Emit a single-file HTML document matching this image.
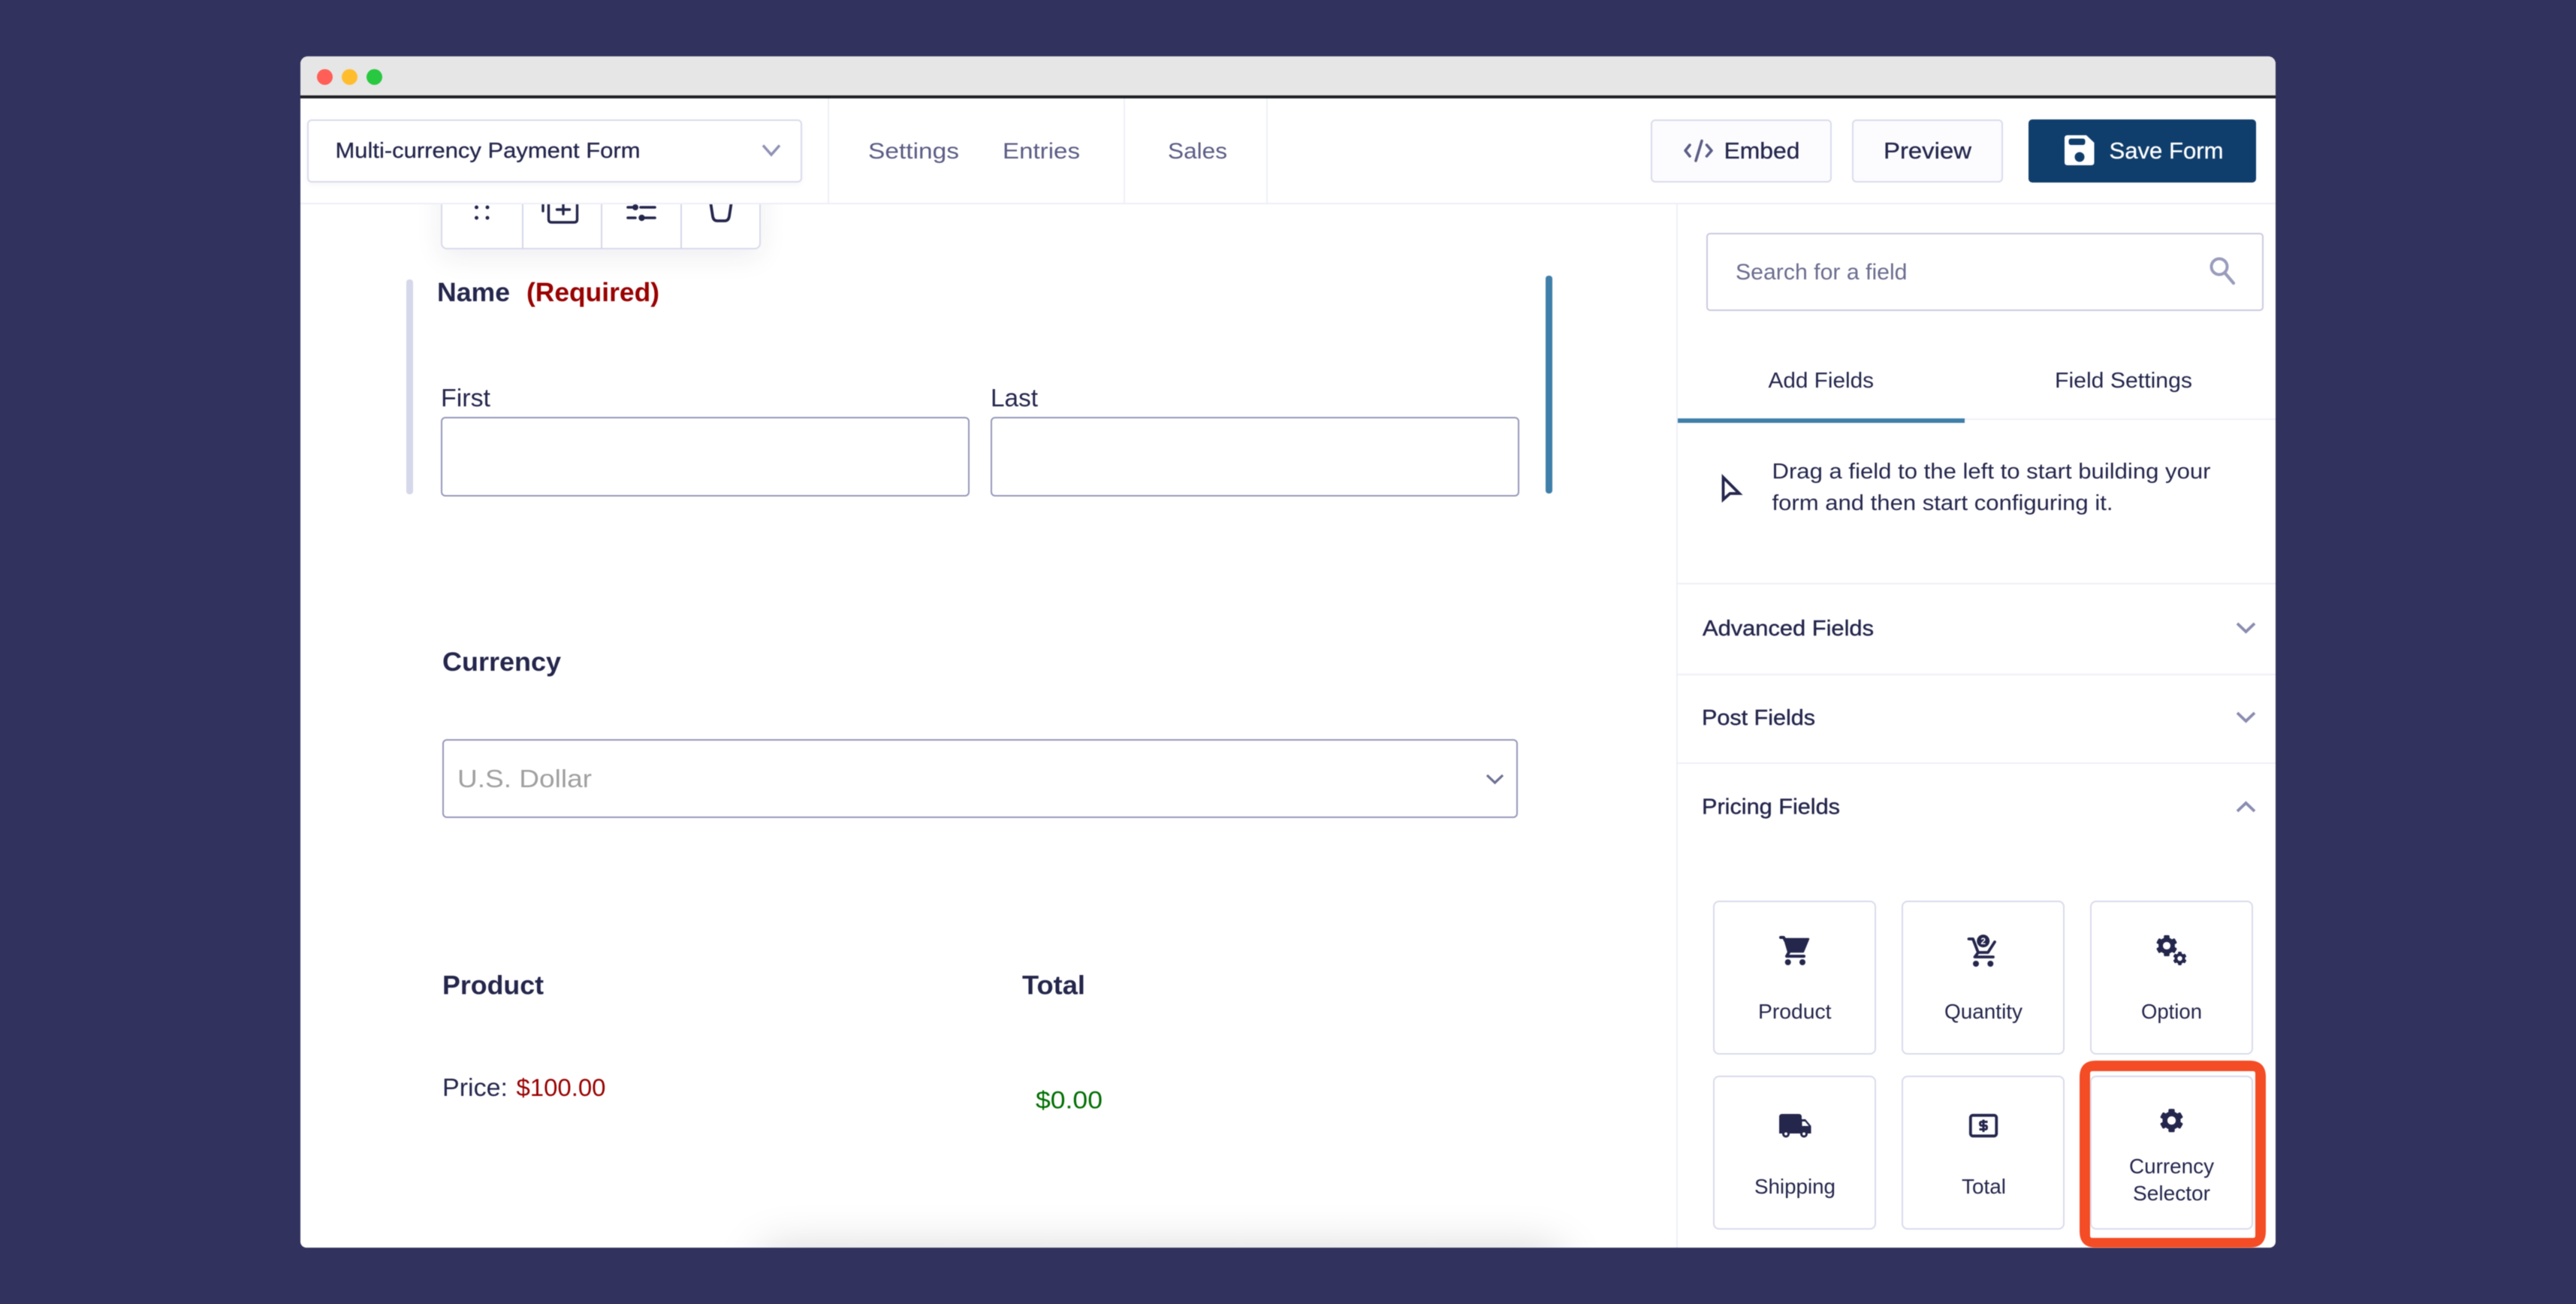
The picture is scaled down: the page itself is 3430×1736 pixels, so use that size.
<!DOCTYPE html>
<html lang="en">
<head>
<meta charset="utf-8">
<title>Multi-currency Payment Form</title>
<style>
html,body{margin:0;padding:0;width:3430px;height:1736px;overflow:hidden;background:#31335e}
.b{position:absolute;box-sizing:border-box}
#win{position:absolute;left:400px;top:75px;width:2630px;height:1586px;background:#fff;border-radius:10px 10px 8px 8px;overflow:hidden;filter:blur(.5px)}
.w{position:absolute;box-sizing:border-box}
.card{position:absolute;box-sizing:border-box;background:#fff;border:2.5px solid #d9dbec;border-radius:8px;width:217px;height:205px}
.hl{position:absolute;background:#eeeef8;height:2px}
.vl{position:absolute;background:#eeeef8;width:2px}
svg{position:absolute;left:0;top:0;filter:blur(.5px)}
text{font-family:"Liberation Sans",sans-serif;fill:#24264c}
.m{stroke:#24264c;stroke-width:.5px}
.g{fill:#5b5d85}
</style>
</head>
<body>
<div id="win">
  <!-- page shadow at the bottom of the canvas -->
  <div class="w" style="left:612px;top:1587px;width:1068px;height:60px;border-radius:20px;box-shadow:0 0 60px rgba(0,0,0,.17)"></div>

  <!-- field toolbar -->
  <div class="w" style="left:187px;top:150px;width:426px;height:107px;background:#fff;border:2.5px solid #d9dbec;border-radius:8px;box-shadow:0 10px 36px rgba(36,38,76,.08)"></div>
  <div class="w" style="left:295px;top:190px;width:2px;height:66px;background:#d5d7ea"></div>
  <div class="w" style="left:400px;top:190px;width:2px;height:66px;background:#d5d7ea"></div>
  <div class="w" style="left:506px;top:190px;width:2px;height:66px;background:#d5d7ea"></div>

  <!-- title bar -->
  <div class="w" style="left:0;top:0;width:2630px;height:52px;background:#e6e6e6"></div>
  <div class="w" style="left:0;top:52px;width:2630px;height:4px;background:#1d2125"></div>
  <div class="w" style="left:22px;top:17px;width:21px;height:21px;border-radius:50%;background:#ff5f57"></div>
  <div class="w" style="left:55px;top:17px;width:21px;height:21px;border-radius:50%;background:#ffbd2e"></div>
  <div class="w" style="left:88px;top:17px;width:21px;height:21px;border-radius:50%;background:#28c840"></div>

  <!-- header -->
  <div class="w" style="left:0;top:56px;width:2630px;height:139px;background:#fff"></div>
  <div class="hl" style="left:0;top:195px;width:2630px"></div>
  <div class="vl" style="left:702px;top:56px;height:139px"></div>
  <div class="vl" style="left:1096px;top:56px;height:139px"></div>
  <div class="vl" style="left:1286px;top:56px;height:139px"></div>
  <div class="w" style="left:9px;top:84px;width:659px;height:84px;background:#fff;border:2.5px solid #d9dbec;border-radius:6px;box-shadow:0 3px 8px rgba(36,38,76,.04)"></div>
  <div class="w" style="left:1798px;top:84px;width:241px;height:84px;background:#fcfcff;border:2.5px solid #d9dbec;border-radius:6px"></div>
  <div class="w" style="left:2066px;top:84px;width:201px;height:84px;background:#fcfcff;border:2.5px solid #d9dbec;border-radius:6px"></div>
  <div class="w" style="left:2301px;top:84px;width:303px;height:84px;background:#103e6c;border-radius:5px"></div>

  <!-- sidebar -->
  <div class="vl" style="left:1832px;top:197px;height:1389px"></div>
  <div class="w" style="left:1872px;top:235px;width:742px;height:104px;background:#fff;border:2.5px solid #c8cae0;border-radius:5px"></div>
  <div class="hl" style="left:2216px;top:482px;width:414px"></div>
  <div class="w" style="left:1834px;top:482px;width:382px;height:6px;background:#3f7fa9"></div>
  <div class="hl" style="left:1834px;top:701px;width:796px"></div>
  <div class="hl" style="left:1834px;top:822px;width:796px"></div>
  <div class="hl" style="left:1834px;top:940px;width:796px"></div>

  <div class="card" style="left:1881px;top:1124px"></div>
  <div class="card" style="left:2132px;top:1124px"></div>
  <div class="card" style="left:2383px;top:1124px"></div>
  <div class="card" style="left:1881px;top:1357px"></div>
  <div class="card" style="left:2132px;top:1357px"></div>
  <div class="card" style="left:2383px;top:1357px"></div>

  <!-- name field -->
  <div class="w" style="left:141px;top:297px;width:9px;height:286px;background:#d5d7ea;border-radius:4px"></div>
  <div class="w" style="left:1658px;top:292px;width:9px;height:290px;background:#3f7fa9;border-radius:4px"></div>
  <div class="w" style="left:187px;top:480px;width:704px;height:106px;border:2.5px solid #9597ba;border-radius:6px;background:#fff"></div>
  <div class="w" style="left:919px;top:480px;width:704px;height:106px;border:2.5px solid #9597ba;border-radius:6px;background:#fff"></div>
  <div class="w" style="left:189px;top:909px;width:1432px;height:105px;border:2.5px solid #9597ba;border-radius:6px;background:#fff"></div>
</div>

<svg width="3430" height="1736" viewBox="0 0 3430 1736" xmlns="http://www.w3.org/2000/svg">
  <defs>
    <clipPath id="tb"><rect x="588" y="272" width="425" height="60"/></clipPath>
    <g id="gear">
      <circle r=".78" fill="#24264c"/>
      <rect x="-.27" y="-1" width=".54" height="2" rx=".12" fill="#24264c"/>
      <rect x="-.27" y="-1" width=".54" height="2" rx=".12" fill="#24264c" transform="rotate(60)"/>
      <rect x="-.27" y="-1" width=".54" height="2" rx=".12" fill="#24264c" transform="rotate(120)"/>
      <circle r=".36" fill="#fff"/>
    </g>
  </defs>

  <!-- toolbar icons -->
  <g clip-path="url(#tb)" fill="none" stroke="#24264c" stroke-linecap="round" stroke-linejoin="round">
    <g fill="#24264c" stroke="none">
      <circle cx="634.500" cy="276" r="2.500"/><circle cx="649" cy="276" r="2.500"/>
      <circle cx="634.500" cy="290" r="2.500"/><circle cx="649" cy="290" r="2.500"/>
    </g>
    <path d="M730.500 262V292Q730.500 296 734.500 296H764.500Q768.500 296 768.500 292V262" stroke-width="3.400"/>
    <path d="M750 268V285M741.500 279H758.500M723 266V281" stroke-width="3.400"/>
    <path d="M836 276H846M853 276H872M836 290H846M855 290H872" stroke-width="3.600"/>
    <circle cx="846" cy="276" r="4" fill="#24264c" stroke="none"/>
    <circle cx="854.500" cy="290" r="4.200" fill="#24264c" stroke="none"/>
    <path d="M945 262L949 288Q950 294 955 294H965Q970 294 971 288L975 262" stroke-width="3.800"/>
  </g>

  <!-- header text -->
  <text x="446.500" y="210" font-size="29" textLength="406" lengthAdjust="spacingAndGlyphs" class="m" style="stroke-width:.3px">Multi-currency Payment Form</text>
  <path d="M1016 193.500L1027 206L1038 193.500" fill="none" stroke="#9092b6" stroke-width="3.500"/>
  <text class="g" x="1156" y="211" font-size="30" textLength="121" lengthAdjust="spacingAndGlyphs">Settings</text>
  <text class="g" x="1335" y="211" font-size="30" textLength="103" lengthAdjust="spacingAndGlyphs">Entries</text>
  <text class="g" x="1555" y="211" font-size="30" textLength="79" lengthAdjust="spacingAndGlyphs">Sales</text>

  <path d="M2250 193L2244 200.500L2250 208M2272.500 193L2279 200.500L2272.500 208" fill="none" stroke="#5b5d85" stroke-width="3.600" stroke-linecap="round" stroke-linejoin="round"/>
  <path d="M2266 187.500L2258 214" fill="none" stroke="#5b5d85" stroke-width="3.600" stroke-linecap="round"/>
  <text x="2295.500" y="211" font-size="31" textLength="101" lengthAdjust="spacingAndGlyphs" class="m" style="stroke-width:.3px">Embed</text>
  <text x="2508" y="211" font-size="31" textLength="117" lengthAdjust="spacingAndGlyphs" class="m" style="stroke-width:.3px">Preview</text>

  <path d="M2753 180H2778L2788.500 190V216Q2788.500 220 2784.500 220H2753Q2749 220 2749 216V184Q2749 180 2753 180Z" fill="#fff"/>
  <rect x="2754.500" y="184.500" width="22" height="8.500" rx="3" fill="#103e6c"/>
  <circle cx="2769" cy="209" r="6.500" fill="#103e6c"/>
  <text x="2808.500" y="211" font-size="31" textLength="152" lengthAdjust="spacingAndGlyphs" style="fill:#fff;stroke:#fff;stroke-width:.3px">Save Form</text>

  <!-- search -->
  <text x="2311" y="372" font-size="29.500" textLength="228.500" lengthAdjust="spacingAndGlyphs" style="fill:#6b6d8f">Search for a field</text>
  <circle cx="2955" cy="355" r="10.500" fill="none" stroke="#9a9cbc" stroke-width="4"/>
  <path d="M2963 364L2974 377" fill="none" stroke="#9a9cbc" stroke-width="4.200" stroke-linecap="round"/>

  <!-- tabs -->
  <text x="2354.500" y="516" font-size="29" textLength="140.500" lengthAdjust="spacingAndGlyphs">Add Fields</text>
  <text x="2736" y="516" font-size="29" textLength="183" lengthAdjust="spacingAndGlyphs">Field Settings</text>

  <!-- hint -->
  <path d="M2294.500 635.500L2316 657H2303.500L2294.500 665Z" fill="#fff" stroke="#24264c" stroke-width="3.800"/>
  <text x="2359.500" y="637" font-size="29" textLength="584" lengthAdjust="spacingAndGlyphs">Drag a field to the left to start building your</text>
  <text x="2359.500" y="679" font-size="29" textLength="454" lengthAdjust="spacingAndGlyphs">form and then start configuring it.</text>

  <!-- sections -->
  <text x="2267" y="846" font-size="29" textLength="228" lengthAdjust="spacingAndGlyphs" class="m" style="stroke-width:.4px">Advanced Fields</text>
  <text x="2266" y="965" font-size="29" textLength="151" lengthAdjust="spacingAndGlyphs" class="m" style="stroke-width:.4px">Post Fields</text>
  <text x="2266" y="1083.500" font-size="29" textLength="184" lengthAdjust="spacingAndGlyphs" class="m" style="stroke-width:.4px">Pricing Fields</text>
  <path d="M2979 830L2990.500 841L3002 830M2979 949L2990.500 960L3002 949M2979 1080L2990.500 1069L3002 1080" fill="none" stroke="#8a8cb0" stroke-width="3.800"/>

  <!-- card icons -->
  <g fill="none" stroke="#24264c" stroke-linecap="round" stroke-linejoin="round">
    <!-- product -->
    <path d="M2371 1248H2375L2377 1252" stroke-width="4"/>
    <path d="M2376 1250H2408L2401 1267H2381Z" fill="#24264c" stroke-width="2.400"/>
    <path d="M2383 1266L2379 1273H2402" stroke-width="4"/>
    <!-- quantity -->
    <path d="M2621.500 1250H2627L2634 1268H2647L2656 1254" stroke-width="3.800"/>
    <path d="M2634 1268L2629.500 1274H2654" stroke-width="3.800"/>
    <!-- total -->
    <rect x="2623.800" y="1484.800" width="34.500" height="27.500" rx="3" stroke-width="3.800"/>
    <path d="M2646.500 1493.500H2638.500Q2636.500 1493.500 2636.500 1496Q2636.500 1498.500 2638.500 1498.500H2643.500Q2645.500 1498.500 2645.500 1501Q2645.500 1503.500 2643.500 1503.500H2635.500M2641 1490.500V1507" stroke-width="3" stroke-linecap="butt"/>
  </g>
  <g fill="#24264c">
    <circle cx="2380.700" cy="1281" r="4"/><circle cx="2400" cy="1281" r="4"/>
    <circle cx="2631" cy="1283" r="4"/><circle cx="2650.300" cy="1283" r="4"/>
    <circle cx="2640.700" cy="1252.700" r="8.500"/>
    <!-- truck -->
    <path d="M2373 1483H2395Q2399 1483 2399 1487V1490H2404L2411.500 1499V1509H2369V1487Q2369 1483 2373 1483Z"/>
    <circle cx="2378" cy="1509.500" r="5"/><circle cx="2402" cy="1509.500" r="5"/>
  </g>
  <text x="2640.700" y="1257" font-size="12" font-weight="700" text-anchor="middle" style="fill:#fff">2</text>
  <path d="M2399.500 1493H2403.500L2408.500 1499H2399.500Z" fill="#fff"/>
  <circle cx="2378" cy="1509.500" r="2" fill="#fff"/><circle cx="2402" cy="1509.500" r="2" fill="#fff"/>
  <use href="#gear" transform="translate(2885 1259) scale(14)"/>
  <use href="#gear" transform="translate(2902.500 1276) scale(9)"/>
  <use href="#gear" transform="translate(2891.500 1491.700) scale(15.500)"/>

  <!-- card labels -->
  <text x="2341" y="1356" font-size="27.500" textLength="97.500" lengthAdjust="spacingAndGlyphs">Product</text>
  <text x="2589" y="1356" font-size="27.500" textLength="104" lengthAdjust="spacingAndGlyphs">Quantity</text>
  <text x="2851" y="1356" font-size="27.500" textLength="81" lengthAdjust="spacingAndGlyphs">Option</text>
  <text x="2336" y="1589" font-size="27.500" textLength="108" lengthAdjust="spacingAndGlyphs">Shipping</text>
  <text x="2612" y="1589" font-size="27.500" textLength="59" lengthAdjust="spacingAndGlyphs">Total</text>
  <text x="2835" y="1562" font-size="27.500" textLength="113" lengthAdjust="spacingAndGlyphs">Currency</text>
  <text x="2840" y="1598" font-size="27.500" textLength="103" lengthAdjust="spacingAndGlyphs">Selector</text>

  <!-- highlight -->
  <path fill-rule="evenodd" fill="#f44c25" d="M2791 1412H2995Q3017 1412 3017 1434V1639Q3017 1661 2995 1661H2791Q2769 1661 2769 1639V1434Q2769 1412 2791 1412ZM2786 1426Q2783 1426 2783 1429V1645Q2783 1648 2786 1648H3000Q3003 1648 3003 1645V1429Q3003 1426 3000 1426Z"/>

  <!-- form -->
  <text x="582" y="401" font-size="35" font-weight="700" textLength="97" lengthAdjust="spacingAndGlyphs">Name</text>
  <text x="701" y="401" font-size="35" font-weight="700" textLength="177" lengthAdjust="spacingAndGlyphs" style="fill:#990000">(Required)</text>
  <text x="587" y="541" font-size="33" textLength="66" lengthAdjust="spacingAndGlyphs">First</text>
  <text x="1319" y="541" font-size="33" textLength="63" lengthAdjust="spacingAndGlyphs">Last</text>
  <text x="589" y="893" font-size="35" font-weight="700" textLength="158" lengthAdjust="spacingAndGlyphs">Currency</text>
  <text x="609" y="1048" font-size="33" textLength="179" lengthAdjust="spacingAndGlyphs" style="fill:#a0a0a0">U.S. Dollar</text>
  <path d="M1980 1032L1990.500 1042L2001 1032" fill="none" stroke="#6d6f92" stroke-width="3.200"/>
  <text x="589" y="1323.500" font-size="35" font-weight="700" textLength="135" lengthAdjust="spacingAndGlyphs">Product</text>
  <text x="1361" y="1323.500" font-size="35" font-weight="700" textLength="84" lengthAdjust="spacingAndGlyphs">Total</text>
  <text x="589" y="1459" font-size="33" textLength="87" lengthAdjust="spacingAndGlyphs">Price:</text>
  <text x="687.500" y="1459" font-size="32.500" textLength="119" lengthAdjust="spacingAndGlyphs" style="fill:#990000">$100.00</text>
  <text x="1379" y="1475.500" font-size="32.500" textLength="89" lengthAdjust="spacingAndGlyphs" style="fill:#006f00">$0.00</text>
</svg>
</body>
</html>
